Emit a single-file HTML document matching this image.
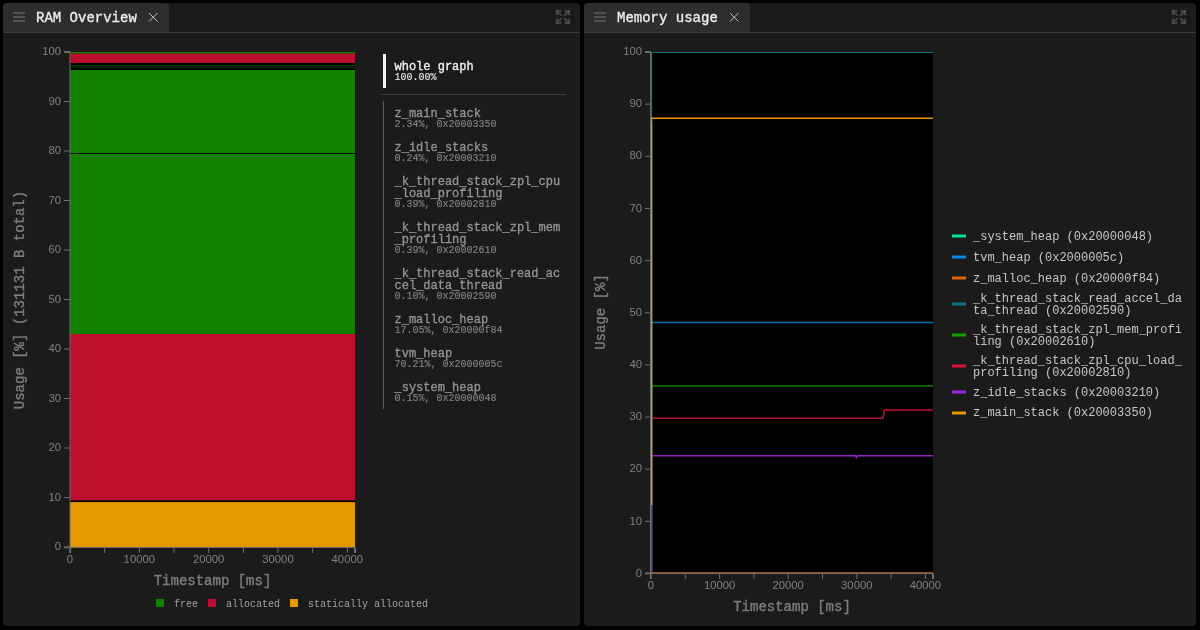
<!DOCTYPE html>
<html>
<head>
<meta charset="utf-8">
<title>Memory profiling</title>
<style>
html,body{margin:0;padding:0;background:#000;}
body{width:1200px;height:630px;overflow:hidden;position:relative;font-family:"Liberation Mono",monospace;}
.panel{position:absolute;top:3px;height:623px;background:#1b1b1b;border-radius:4px;}
.tl{position:absolute;left:0;top:0;width:100%;height:100%;will-change:transform;}
#p1{left:3px;width:577px;}
#p2{left:584px;width:612px;}
.hdr{position:absolute;left:0;top:0;right:0;height:29px;border-bottom:1px solid #3b3b3b;}
.tab{position:absolute;left:0;top:0;height:29px;background:#2d2d2d;border-radius:4px 4px 0 0;}
.ttl{position:absolute;left:33px;top:6px;font-size:14px;line-height:18px;color:#ededed;white-space:nowrap;-webkit-text-stroke:0.35px #ededed;}
svg{position:absolute;left:0;top:0;will-change:transform;}
.tick{font-family:"Liberation Sans",sans-serif;font-size:11.3px;fill:#808080;}
.axl{font-family:"Liberation Mono",monospace;font-size:14px;fill:#7c7c7c;stroke:#7c7c7c;stroke-width:0.4px;}
.leg1{position:absolute;left:391.5px;font-size:12px;line-height:12px;color:#949494;-webkit-text-stroke:0.32px #949494;width:172px;word-break:break-all;margin-top:1px;}
.leg1 small{display:block;font-size:10px;line-height:10px;font-weight:normal;color:#848484;-webkit-text-stroke:0.12px #848484;}
.leg2{position:absolute;left:389px;font-size:12px;line-height:12px;color:#c6c6c6;width:215px;word-break:break-all;}
.bl{position:absolute;font-size:10px;line-height:12px;color:#a2a2a2;top:596.25px;white-space:nowrap;}
</style>
</head>
<body>

<div class="panel" id="p1">
  <div class="hdr"><div class="tab" style="width:166px"></div></div>
  <div class="tl"><div class="ttl">RAM Overview</div>
  <div class="leg1" style="top:57px;color:#f2f2f2;-webkit-text-stroke-color:#f2f2f2">whole graph<small style="color:#e8e8e8;-webkit-text-stroke-color:#e8e8e8">100.00%</small></div>
  <div class="leg1" style="top:104px">z_main_stack<small>2.34%, 0x20003350</small></div>
  <div class="leg1" style="top:138px">z_idle_stacks<small>0.24%, 0x20003210</small></div>
  <div class="leg1" style="top:172px">_k_thread_stack_zpl_cpu_load_profiling<small>0.39%, 0x20002810</small></div>
  <div class="leg1" style="top:218px">_k_thread_stack_zpl_mem_profiling<small>0.39%, 0x20002610</small></div>
  <div class="leg1" style="top:264px">_k_thread_stack_read_accel_data_thread<small>0.10%, 0x20002590</small></div>
  <div class="leg1" style="top:310px">z_malloc_heap<small>17.05%, 0x20000f84</small></div>
  <div class="leg1" style="top:344px">tvm_heap<small>70.21%, 0x2000005c</small></div>
  <div class="leg1" style="top:378px">_system_heap<small>0.15%, 0x20000048</small></div>
  <div class="bl" style="left:171px">free</div>
  <div class="bl" style="left:223px">allocated</div>
  <div class="bl" style="left:305px">statically allocated</div>
  </div>
</div>

<div class="panel" id="p2">
  <div class="hdr"><div class="tab" style="width:166px"></div></div>
  <div class="tl"><div class="ttl">Memory usage</div>
  <div class="leg2" style="top:228.3px">_system_heap (0x20000048)</div>
  <div class="leg2" style="top:249.3px">tvm_heap (0x2000005c)</div>
  <div class="leg2" style="top:270.3px">z_malloc_heap (0x20000f84)</div>
  <div class="leg2" style="top:290px">_k_thread_stack_read_accel_data_thread (0x20002590)</div>
  <div class="leg2" style="top:320.9px">_k_thread_stack_zpl_mem_profiling (0x20002610)</div>
  <div class="leg2" style="top:351.8px">_k_thread_stack_zpl_cpu_load_profiling (0x20002810)</div>
  <div class="leg2" style="top:383.7px">z_idle_stacks (0x20003210)</div>
  <div class="leg2" style="top:404.3px">z_main_stack (0x20003350)</div>
  </div>
</div>

<svg width="1200" height="630" viewBox="0 0 1200 630">
  <g stroke="#515151" stroke-width="2">
    <path d="M13 13H25M13 17H25M13 21H25"/>
    <path d="M594 13H606M594 17H606M594 21H606"/>
  </g>
  <g stroke="#c4c4c4" stroke-width="1" fill="none">
    <path d="M149 13L157.5 21.5M157.5 13L149 21.5"/>
    <path d="M730 13L738.5 21.5M738.5 13L730 21.5"/>
  </g>
  <g><g fill="#464646"><rect x="555.8" y="9.9" width="5.2" height="5.2"/><rect x="564.8" y="9.9" width="5.2" height="5.2"/><rect x="555.8" y="18.9" width="5.2" height="5.2"/><rect x="564.8" y="18.9" width="5.2" height="5.2"/></g><path d="M558 12.1L561.4 15.5M567.8 12.1L564.4 15.5M567.8 21.9L564.4 18.5M558 21.9L561.4 18.5" stroke="#222" stroke-width="2.2" fill="none"/><path d="M556.6 10.7L561.7 15.8M569.2 10.7L564.1 15.8M569.2 23.3L564.1 18.2M556.6 23.3L561.7 18.2" stroke="#6c6c6c" stroke-width="0.9" fill="none"/></g>
  <g><g fill="#464646"><rect x="1171.8" y="9.9" width="5.2" height="5.2"/><rect x="1180.8" y="9.9" width="5.2" height="5.2"/><rect x="1171.8" y="18.9" width="5.2" height="5.2"/><rect x="1180.8" y="18.9" width="5.2" height="5.2"/></g><path d="M1174 12.1L1177.4 15.5M1183.8 12.1L1180.4 15.5M1183.8 21.9L1180.4 18.5M1174 21.9L1177.4 18.5" stroke="#222" stroke-width="2.2" fill="none"/><path d="M1172.6 10.7L1177.7 15.8M1185.2 10.7L1180.1 15.8M1185.2 23.3L1180.1 18.2M1172.6 23.3L1177.7 18.2" stroke="#6c6c6c" stroke-width="0.9" fill="none"/></g>
  <!-- LEFT CHART -->
  <g shape-rendering="crispEdges">
    <rect x="70" y="52" width="285" height="495" fill="#000"/>
  </g>
  <rect x="70" y="52" width="285" height="1.7" fill="#138000"/>
  <rect x="70" y="53.6" width="285" height="9.3" fill="#be0e2e"/>
  <rect x="70" y="65" width="285" height="0.8" fill="#0d5a00"/>
  <rect x="70" y="66.9" width="285" height="0.7" fill="#0d5a00"/>
  <rect x="70" y="70" width="285" height="83" fill="#138000"/>
  <rect x="70" y="154" width="285" height="180" fill="#138000"/>
  <rect x="70" y="334" width="285" height="166.3" fill="#be0e2e"/>
  <rect x="70" y="502.1" width="285" height="44.9" fill="#e69800"/>
  <g stroke="#6c6c6c" stroke-width="1" fill="none">
  <path d="M70 51.5V548"/>
  <path d="M69.5 547.5H355.5"/>
  <path d="M64 547H70M64 497.5H70M64 448H70M64 398.5H70M64 349H70M64 299.5H70M64 250H70M64 200.5H70M64 151H70M64 101.5H70M64 52H70"/>
  <path d="M70 547.5V553M104.66 547.5V553M139.32 547.5V553M173.99 547.5V553M208.65 547.5V553M243.31 547.5V553M277.98 547.5V553M312.64 547.5V553M347.3 547.5V553"/>
  </g>
  <g fill="#6c6c6c">
  <rect x="64" y="51" width="6" height="2"/>
  <rect x="64" y="546.5" width="6" height="1.8"/>
  <rect x="69.5" y="547.5" width="1.7" height="5.5"/>
  <rect x="354" y="547.5" width="2" height="5.5"/>
  </g>
  <g class="tick" text-anchor="end">
  <text x="61" y="55">100</text>
  <text x="61" y="105">90</text>
  <text x="61" y="154">80</text>
  <text x="61" y="204">70</text>
  <text x="61" y="253">60</text>
  <text x="61" y="303">50</text>
  <text x="61" y="352">40</text>
  <text x="61" y="402">30</text>
  <text x="61" y="451">20</text>
  <text x="61" y="501">10</text>
  <text x="61" y="550">0</text>
  </g>
  <g class="tick" text-anchor="middle">
  <text x="70" y="563">0</text>
  <text x="139.32" y="563">10000</text>
  <text x="208.65" y="563">20000</text>
  <text x="277.98" y="563">30000</text>
  <text x="347.3" y="563">40000</text>
  </g>
  <text class="axl" text-anchor="middle" x="212.5" y="585">Timestamp [ms]</text>
  <text class="axl" text-anchor="middle" transform="translate(23.6,300) rotate(-90)">Usage [%] (131131 B total)</text>

  <rect x="383" y="54" width="3" height="34" fill="#f0f0f0"/>
  <rect x="381" y="94" width="185" height="1" fill="#3c3c3c"/>
  <rect x="383" y="101" width="1" height="308" fill="#5a5a5a"/>
  <rect x="156" y="599" width="8" height="8" fill="#138000"/>
  <rect x="208" y="599" width="8" height="8" fill="#be0e2e"/>
  <rect x="290" y="599" width="8" height="8" fill="#e69800"/>
  <!-- RIGHT CHART -->
  <rect x="651" y="52" width="282" height="521.5" fill="#000"/>
  <g stroke="#6c6c6c" stroke-width="1" fill="none">
  <path d="M650.5 51.5V574.5"/>
  <path d="M650 573.5H933.5"/>
  <path d="M645 573.5H651M645 521.35H651M645 469.2H651M645 417.05H651M645 364.9H651M645 312.75H651M645 260.6H651M645 208.45H651M645 156.3H651M645 104.15H651M645 52H651"/>
  <path d="M651 573.5V579M685.3 573.5V579M719.6 573.5V579M753.9 573.5V579M788.2 573.5V579M822.5 573.5V579M856.8 573.5V579M891.1 573.5V579M925.4 573.5V579"/>
  </g>
  <g fill="#6c6c6c">
  <rect x="645" y="51" width="6" height="2"/>
  <rect x="645" y="572.5" width="6" height="1.8"/>
  <rect x="650" y="573.5" width="1.7" height="5.5"/>
  <rect x="932" y="573.5" width="2" height="5.5"/>
  </g>
  <g class="tick" text-anchor="end">
  <text x="642" y="55">100</text>
  <text x="642" y="107">90</text>
  <text x="642" y="159">80</text>
  <text x="642" y="212">70</text>
  <text x="642" y="264">60</text>
  <text x="642" y="316">50</text>
  <text x="642" y="368">40</text>
  <text x="642" y="420">30</text>
  <text x="642" y="472">20</text>
  <text x="642" y="525">10</text>
  <text x="642" y="577">0</text>
  </g>
  <g class="tick" text-anchor="middle">
  <text x="651" y="589">0</text>
  <text x="719.6" y="589">10000</text>
  <text x="788.2" y="589">20000</text>
  <text x="856.8" y="589">30000</text>
  <text x="925.4" y="589">40000</text>
  </g>
  <clipPath id="cp2"><rect x="651" y="52" width="282" height="521.25"/></clipPath>
  <g fill="none" stroke-width="1.5" clip-path="url(#cp2)">
    <path d="M651.45 573V52.2H933" stroke="#0f7182"/>
    <path d="M651.45 573V385.9H933" stroke="#138000"/>
    <path d="M651.45 573V418.3H883L884.3 410H933" stroke="#be0e2e"/>
    <path d="M651.45 573V455.7H855.5L856.5 457.5L857.5 455.7H933" stroke="#9a1fc0"/>
    <path d="M651.45 573V322.4H933" stroke="#0072b2"/>
    <path d="M651.45 505V118.3H933" stroke="#e69800"/>
    <path d="M651.45 505V125" stroke="#c9973a"/>
    <path d="M651.45 573H933" stroke="#c46a2c"/>
  </g>
  <text class="axl" text-anchor="middle" x="792" y="611">Timestamp [ms]</text>
  <text class="axl" text-anchor="middle" transform="translate(604.6,312) rotate(-90)">Usage [%]</text>

  <g stroke-width="3" stroke-linecap="butt">
    <path d="M952 236H966" stroke="#00e59b"/>
    <path d="M952 257H966" stroke="#0a84e0"/>
    <path d="M952 278H966" stroke="#e0650a"/>
    <path d="M952 304H966" stroke="#00798c"/>
    <path d="M952 335H966" stroke="#1c9c00"/>
    <path d="M952 366H966" stroke="#de1538"/>
    <path d="M952 392H966" stroke="#a223e0"/>
    <path d="M952 413H966" stroke="#e69800"/>
  </g>
</svg>
</body>
</html>
